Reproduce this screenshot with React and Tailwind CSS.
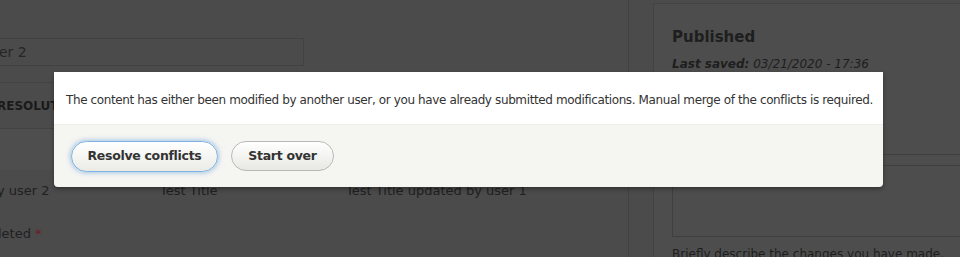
import React from 'react';

const font = { fontFamily: '"DejaVu Sans", "Liberation Sans", sans-serif' };

const ConflictDialog = () => (
  <div className="absolute left-[54px] top-[72px] w-[829px] overflow-hidden rounded-b-[4px] shadow-[0_2px_4px_rgba(0,0,0,0.35)]">
    <div className="bg-white h-[52px] flex items-center px-[12px] pt-[3px]">
      <p className="text-[12px] text-[#333] tracking-[-0.38px] whitespace-nowrap">
        The content has either been modified by another user, or you have already submitted modifications. Manual merge of the conflicts is required.
      </p>
    </div>
    <div className="bg-[#f5f5f2] h-[63px] flex items-center gap-[13px] pl-[17px] border-t border-[#eeeee8]">
      <button className="h-[31px] w-[147px] rounded-full border border-[#7fb2e0] bg-gradient-to-b from-white to-[#ebebe6] text-[12.5px] tracking-[-0.3px] font-bold text-[#333] shadow-[0_0_4px_1px_rgba(80,150,220,0.5)]">
        Resolve conflicts
      </button>
      <button className="h-[30px] w-[103px] rounded-full border border-[#b9b9b4] bg-gradient-to-b from-white to-[#e8e8e3] text-[12.5px] tracking-[-0.3px] font-bold text-[#333]">
        Start over
      </button>
    </div>
  </div>
);

export default function App() {
  return (
    <div className="relative w-[960px] h-[257px] overflow-hidden bg-[#4b4b4b] text-[#1c1c1c]" style={font}>
      <div className="flex h-full">
        {/* main form column, cropped on the left */}
        <div className="w-[629px] shrink-0 border-r border-[#424242] pt-[38px] overflow-hidden">
          <div className="h-[28px] w-[306px] border border-[#414141] flex items-center text-[14px] text-[#262626] -ml-[2px]">
            er 2
          </div>
          <div className="mt-[16px] border-t border-[#434343] h-[46px] flex items-center text-[12px] font-bold uppercase text-[#1a1a1a] -ml-[3px]">
            RESOLUTION
          </div>
          <div className="border-t border-[#434343] h-[42px] bg-[#4e4e4e]" />
          <div className="flex h-[42px] items-center text-[13px] text-[#202020] -ml-[3px]">
            <span className="w-[163px]">y user 2</span>
            <span className="w-[186px]">Test Title</span>
            <span>Test Title updated by user 1</span>
          </div>
          <div className="mt-[12px] text-[13px] text-[#202020] -ml-[2px]">
            leted <span className="text-[#6b1d22]">*</span>
          </div>
        </div>
        {/* sidebar */}
        <div className="ml-[24px] flex-1 mt-[3px] border-l border-t border-[#434343] bg-[#4d4d4d]">
          <div className="h-[151px] border-b border-[#3f3f3f] pl-[18px] pt-[22px]">
            <div className="text-[15px] font-bold text-[#1e1e1e]">Published</div>
            <div className="mt-[6px] text-[12px] italic text-[#1e1e1e]">
              <span className="font-bold">Last saved:</span> 03/21/2020 - 17:36
            </div>
          </div>
          <div className="pl-[18px] pt-[10px]">
            <div className="h-[72px] border border-[#3f3f3f] mr-[-2px]" />
            <div className="mt-[8px] text-[12px] text-[#1e1e1e]">Briefly describe the changes you have made.</div>
          </div>
        </div>
      </div>
      <ConflictDialog />
    </div>
  );
}
